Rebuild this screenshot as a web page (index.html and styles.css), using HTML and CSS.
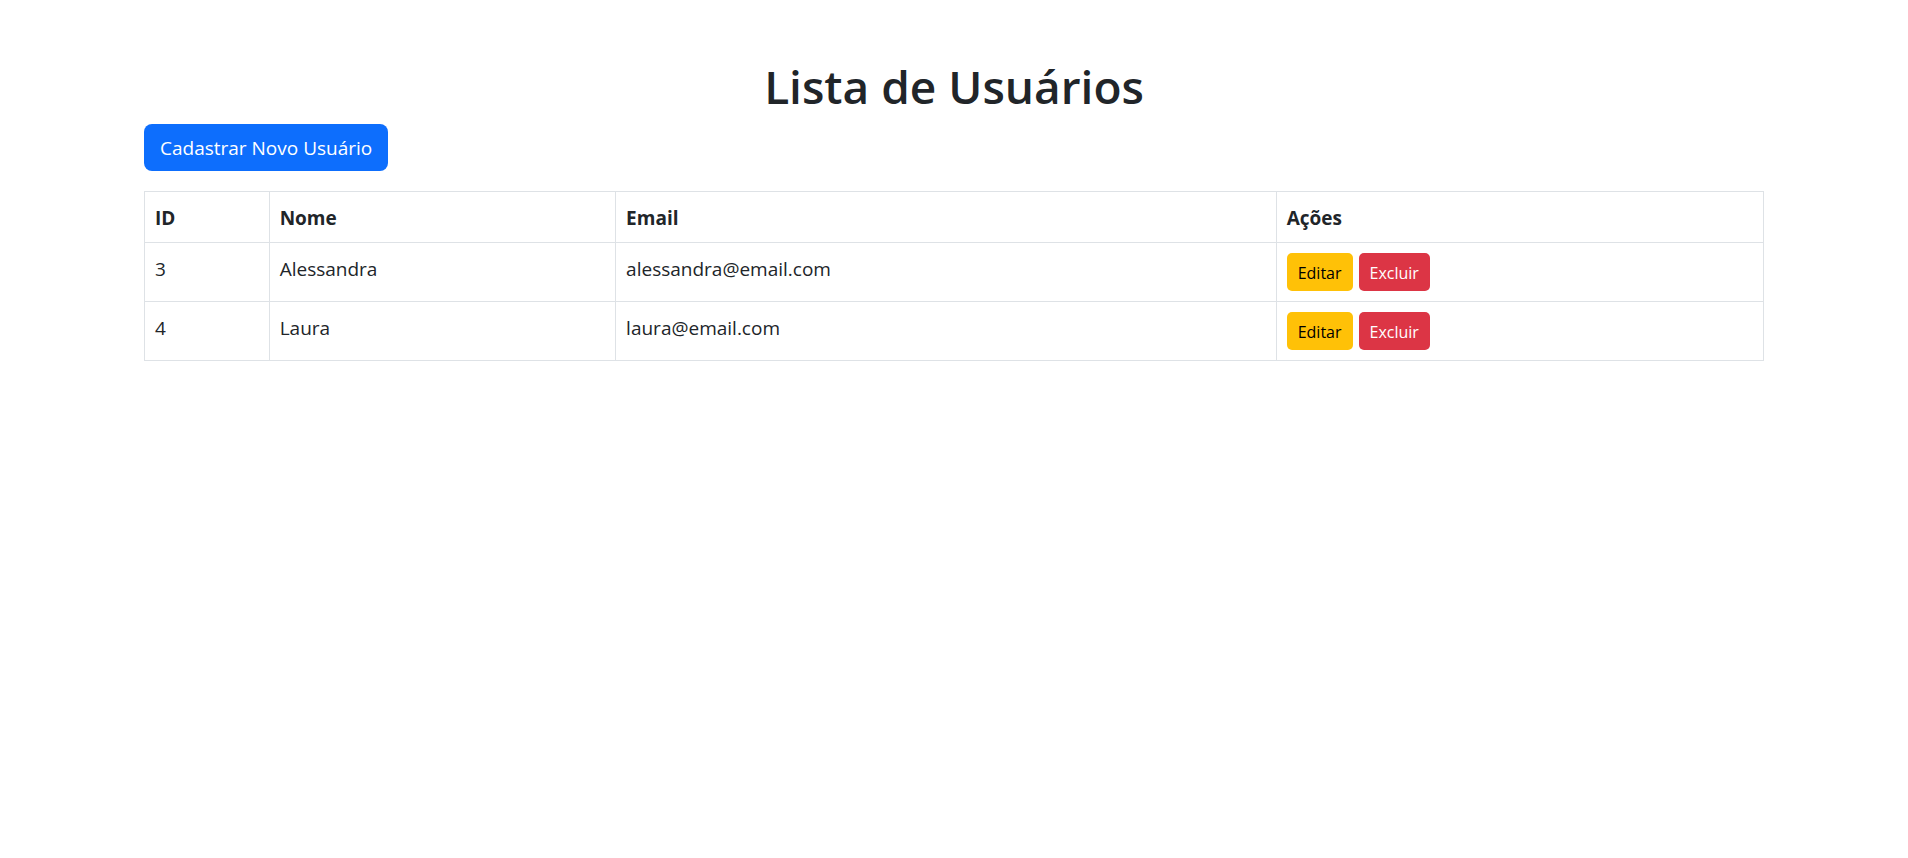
FILE: index.html
```html
<!DOCTYPE html>
<html lang="pt-BR">
<head>
<meta charset="utf-8">
<meta name="viewport" content="width=device-width, initial-scale=1">
<title>Lista de Usuários</title>
<link rel="stylesheet" href="styles.css">
</head>
<body>
<main class="container">
  <h1 class="title">Lista de Usuários</h1>
  <a class="btn btn-primary" href="#novo">Cadastrar Novo Usuário</a>
  <table class="table">
    <colgroup>
      <col class="col-id">
      <col class="col-name">
      <col class="col-email">
      <col class="col-actions">
    </colgroup>
    <thead>
      <tr><th scope="col">ID</th><th scope="col">Nome</th><th scope="col">Email</th><th scope="col">Ações</th></tr>
    </thead>
    <tbody>
      <tr>
        <td>3</td>
        <td>Alessandra</td>
        <td>alessandra@email.com</td>
        <td><div class="actions"><a class="btn btn-sm btn-warning" href="#editar-3">Editar</a><a class="btn btn-sm btn-danger" href="#excluir-3">Excluir</a></div></td>
      </tr>
      <tr>
        <td>4</td>
        <td>Laura</td>
        <td>laura@email.com</td>
        <td><div class="actions"><a class="btn btn-sm btn-warning" href="#editar-4">Editar</a><a class="btn btn-sm btn-danger" href="#excluir-4">Excluir</a></div></td>
      </tr>
    </tbody>
  </table>
</main>
</body>
</html>
```
FILE: styles.css
```css
* {
  box-sizing: border-box;
}

body {
  margin: 0;
  background: #fff;
  color: #212529;
  font-family: "Segoe UI", "Open Sans", "Noto Sans", sans-serif;
  font-size: 19px;
  line-height: 30px;
}

.container {
  max-width: 1650px;
  margin: 0 auto;
  padding: 56px 15px 0;
}

.title {
  margin: 0 0 8px;
  font-size: 46px;
  font-weight: 600;
  line-height: 60px;
  text-align: center;
}

.btn {
  display: inline-block;
  padding: 9px 15px 8px;
  border: 1px solid transparent;
  border-radius: 8px;
  line-height: 28px;
  text-decoration: none;
  vertical-align: top;
}

.btn-primary {
  background: #0d6efd;
  color: #fff;
}

.btn-sm {
  padding: 6px 10px 4px;
  border-radius: 5px;
  font-size: 16px;
  line-height: 26px;
}

.btn-warning {
  background: #ffc107;
  color: #000;
}

.btn-danger {
  background: #dc3545;
  color: #fff;
}

.table {
  width: 100%;
  margin-top: 20px;
  border-collapse: collapse;
  table-layout: fixed;
}

.table th,
.table td {
  padding: 11px 10px 9px;
  border: 1px solid #dee2e6;
  text-align: left;
  vertical-align: top;
}

.table th {
  font-weight: 700;
}

.table .actions-cell,
.table td:last-child {
  padding: 10px;
}

.col-id {
  width: 7.7%;
}

.col-name {
  width: 21.4%;
}

.col-email {
  width: 40.8%;
}

.col-actions {
  width: 30.1%;
}

.actions {
  display: flex;
  gap: 6px;
}
```
